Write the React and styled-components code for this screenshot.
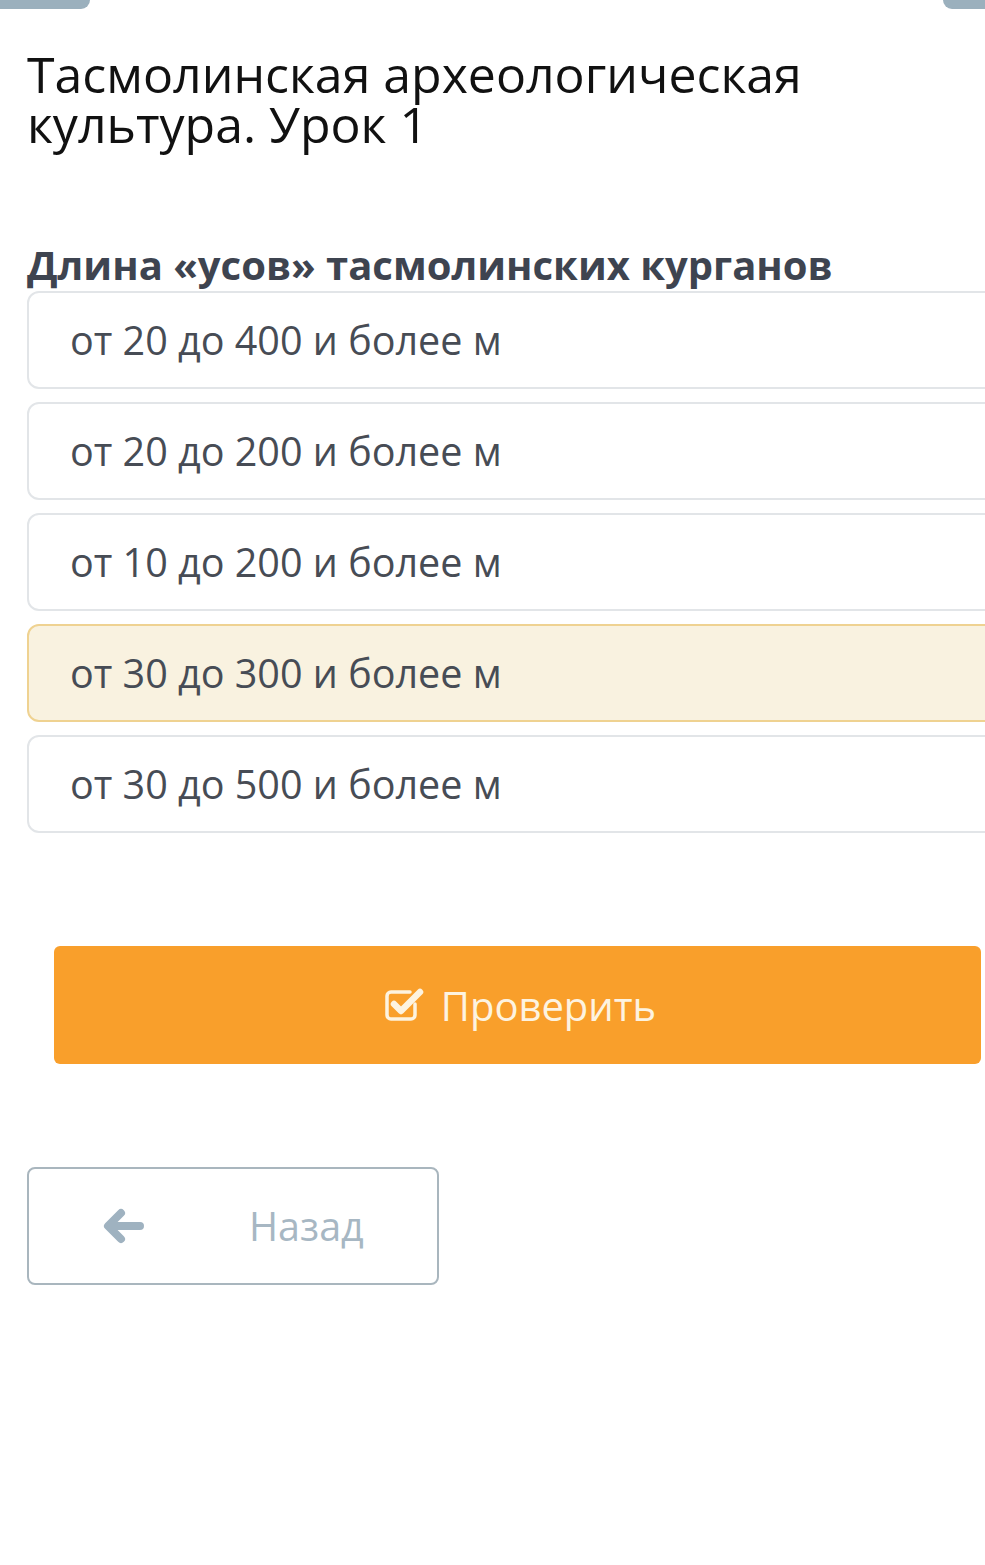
import React from "react";
import styled, { createGlobalStyle } from "styled-components";

const Global = createGlobalStyle`
  html, body { margin: 0; padding: 0; background: #fff; }
  body { font-family: "Open Sans", "Noto Sans", sans-serif; overflow-x: hidden; }
`;

const Page = styled.div`
  width: 985px;
  min-height: 1565px;
  background: #fff;
  overflow: hidden;
`;

const TopStrip = styled.div`
  display: flex;
  justify-content: space-between;
  height: 9px;
`;

const Tab = styled.div`
  width: ${p => p.$w}px;
  height: 9px;
  background: #9bb0bd;
  border-radius: ${p => (p.$right ? "0 0 0 12px" : "0 0 12px 0")};
`;

const Content = styled.div`
  padding: 40px 0 0 27px;
`;

const Title = styled.h1`
  margin: 0;
  font-weight: 400;
  font-size: 50px;
  line-height: 50px;
  color: #111;
`;

const Question = styled.h2`
  margin: 92px 0 0;
  font-weight: 700;
  font-size: 40px;
  line-height: 48px;
  color: #3e4450;
`;

const Options = styled.div`
  display: flex;
  flex-direction: column;
  gap: 13px;
  margin-top: 2px;
  margin-right: -20px;
`;

const Option = styled.div`
  box-sizing: border-box;
  height: 98px;
  display: flex;
  align-items: center;
  padding-left: 41px;
  border: 2px solid ${p => (p.$selected ? "#efd291" : "#e2e5e8")};
  background: ${p => (p.$selected ? "#f9f2e0" : "#fff")};
  border-radius: 12px;
  font-size: 39.5px;
  color: #474c55;
`;

const CheckButton = styled.button`
  box-sizing: border-box;
  margin: 113px 0 0 27px;
  width: 927px;
  height: 118px;
  border: none;
  border-radius: 6px;
  background: #f99f2b;
  color: #fdf3e0;
  display: flex;
  align-items: center;
  justify-content: center;
  gap: 16px;
  font-family: "Open Sans", sans-serif;
  font-size: 40px;
  padding: 0 0 0 6px;
`;

const BackButton = styled.button`
  box-sizing: border-box;
  margin: 103px 0 0;
  width: 412px;
  height: 118px;
  border: 2px solid #a9b6be;
  border-radius: 8px;
  background: #fff;
  display: flex;
  align-items: center;
  padding: 0 0 0 74px;
  font-family: "Open Sans", sans-serif;
  font-size: 39.5px;
  color: #a7b7c3;
`;

const BackLabel = styled.span`
  margin-left: 104px;
`;

const CheckIcon = () => (
  <svg width="40" height="36" viewBox="0 0 40 36">
    <path
      d="M30 17v11a4 4 0 0 1-4 4H6a4 4 0 0 1-4-4V9a4 4 0 0 1 4-4h19"
      fill="none"
      stroke="#fdf3e0"
      strokeWidth="3.5"
      strokeLinecap="round"
    />
    <path
      d="M9 17l7 7L35 5"
      fill="none"
      stroke="#fdf3e0"
      strokeWidth="6.5"
      strokeLinecap="round"
      strokeLinejoin="round"
    />
  </svg>
);

const ArrowLeft = () => (
  <svg width="42" height="36" viewBox="0 0 42 36">
    <path
      d="M18 5L5 18l13 13M6 18h31"
      fill="none"
      stroke="#9fb2c0"
      strokeWidth="8"
      strokeLinecap="round"
      strokeLinejoin="round"
    />
  </svg>
);

const options = [
  "от 20 до 400 и более м",
  "от 20 до 200 и более м",
  "от 10 до 200 и более м",
  "от 30 до 300 и более м",
  "от 30 до 500 и более м",
];

export default function App() {
  return (
    <Page>
      <Global />
      <TopStrip>
        <Tab $w={90} />
        <Tab $w={42} $right />
      </TopStrip>
      <Content>
        <Title>
          Тасмолинская археологическая
          <br />
          культура. Урок 1
        </Title>
        <Question>Длина «усов» тасмолинских курганов</Question>
        <Options>
          {options.map((o, i) => (
            <Option key={o} $selected={i === 3}>
              {o}
            </Option>
          ))}
        </Options>
        <CheckButton>
          <CheckIcon />
          Проверить
        </CheckButton>
        <BackButton>
          <ArrowLeft />
          <BackLabel>Назад</BackLabel>
        </BackButton>
      </Content>
    </Page>
  );
}
